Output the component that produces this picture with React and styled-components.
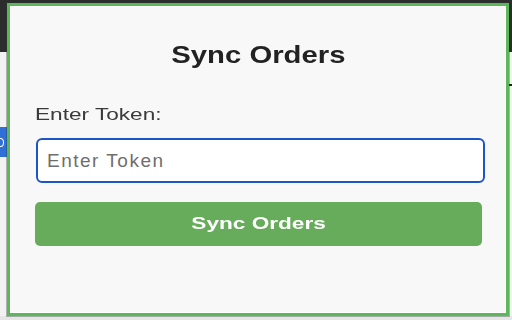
import React from "react";
import styled, { createGlobalStyle } from "styled-components";

const GlobalStyle = createGlobalStyle`
  html, body {
    margin: 0;
    padding: 0;
    overflow: hidden;
    font-family: "Liberation Sans", Arial, Helvetica, sans-serif;
  }
`;

const Screen = styled.div`
  width: 512px;
  height: 320px;
  display: grid;
  grid-template-columns: 7px 502px 3px;
  grid-template-rows: 3px 313px 4px;
  background: linear-gradient(#2c2c2c 0 52px, #f2f2f2 52px 316px, #e6e6e6 316px);
`;

const SideStrip = styled.div`
  grid-column: ${(p) => p.col};
  grid-row: 2;
  display: flex;
  flex-direction: column;
  padding-top: ${(p) => p.offset}px;
  overflow: hidden;
`;

const SideTab = styled.div`
  height: 30px;
  background: #2f6fd8;
  display: flex;
  align-items: center;
`;

// fragment of the page button peeking out behind the popup
const TabRing = styled.div`
  width: 5px;
  height: 7px;
  margin-left: -3px;
  border: 1.5px solid #fff;
  border-radius: 50%;
`;

const SideMark = styled.div`
  height: 2px;
  background: #222;
`;

const Panel = styled.div`
  grid-column: 2;
  grid-row: 2;
  box-sizing: border-box;
  border: 3px solid #5cb65a;
  box-shadow: inset 0 0 0 1px #ffffff, 0 0 0 1px rgba(40, 60, 40, 0.35);
  background: #f8f8f8;
  display: flex;
  flex-direction: column;
  padding: 35px 0 0 25px;
`;

const Stretch = styled.span`
  display: inline-block;
  transform: scaleX(${(p) => p.sx || 1.28});
  transform-origin: ${(p) => p.origin || "center"};
  white-space: nowrap;
`;

const Title = styled.h1`
  margin: 0 0 0 -25px;
  font-size: 24px;
  line-height: 28px;
  font-weight: 700;
  color: #222;
  text-align: center;
`;

const Label = styled.label`
  margin: 36px 0 0 0;
  font-size: 17px;
  line-height: 20px;
  color: #3a3a3a;
`;

const TokenInput = styled.input`
  margin: 13px 0 0 1px;
  width: 449px;
  height: 45px;
  box-sizing: border-box;
  border: 2px solid #1d55c8;
  border-radius: 6px;
  background: #fff;
  padding: 0 0 0 9px;
  font-family: inherit;
  font-size: 19px;
  letter-spacing: 1.5px;
  color: #222;
  caret-color: #111;
  outline: none;

  &::placeholder {
    color: #6e6e6e;
  }
`;

const SyncButton = styled.button`
  margin: 19px 0 0 0;
  width: 447px;
  height: 44px;
  border: none;
  border-radius: 5px;
  background: #67ac5b;
  color: #fff;
  font-family: inherit;
  font-size: 17px;
  font-weight: 700;
  cursor: pointer;
`;

export default function App() {
  return (
    <>
      <GlobalStyle />
      <Screen>
        <SideStrip col={1} offset={124}>
          <SideTab>
            <TabRing />
          </SideTab>
        </SideStrip>
        <Panel>
          <Title>
            <Stretch sx={1.22}>Sync Orders</Stretch>
          </Title>
          <Label htmlFor="token">
            <Stretch origin="left" sx={1.33}>Enter Token:</Stretch>
          </Label>
          <TokenInput id="token" type="text" placeholder="Enter Token" autoFocus />
          <SyncButton type="button">
            <Stretch sx={1.33}>Sync Orders</Stretch>
          </SyncButton>
        </Panel>
        <SideStrip col={3} offset={81}>
          <SideMark />
        </SideStrip>
      </Screen>
    </>
  );
}
